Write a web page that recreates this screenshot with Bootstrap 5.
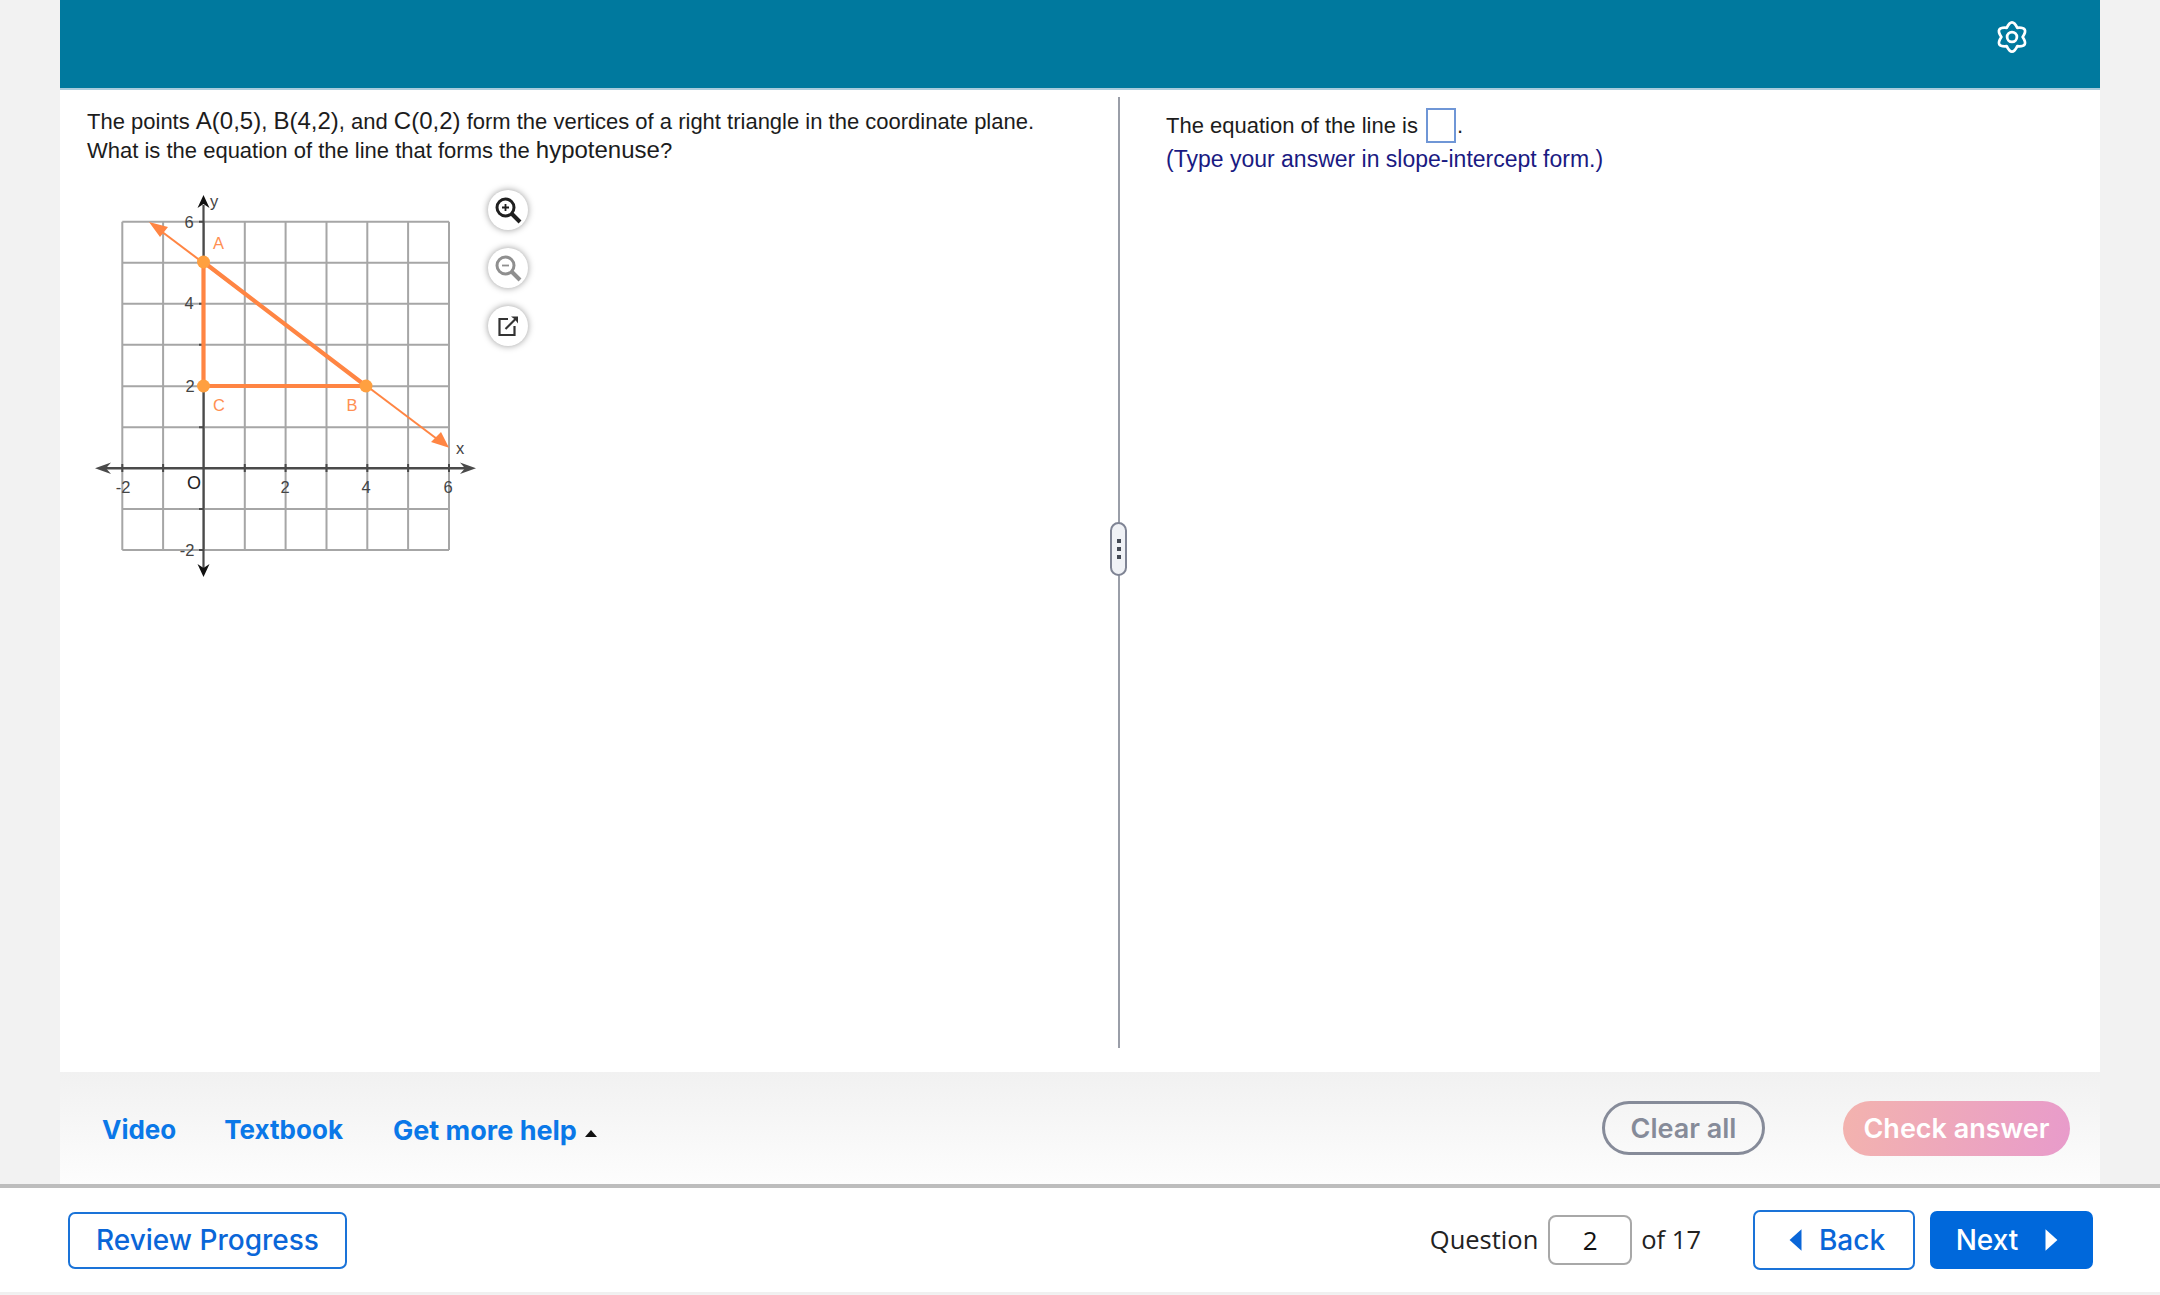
<!DOCTYPE html>
<html lang="en">
<head>
<meta charset="utf-8">
<title>Question</title>
<link href="https://cdn.jsdelivr.net/npm/bootstrap@5.3.0/dist/css/bootstrap.min.css" rel="stylesheet">
<style>
html,body{height:100%}
body{background:#f2f2f2;font-family:"Liberation Sans",Arial,sans-serif;overflow:hidden}
.shell{width:2040px;margin:0 auto}
.topbar{height:90px;background:#00799e;border-bottom:2px solid #a9cbdc;padding-right:71px}
.gear{width:34px;height:34px;margin-top:20px}
.work{height:982px;background:#fff;position:relative}
.leftpane{width:1058px;padding:17px 0 0 27px}
.qtext{font-size:22px;line-height:29px;color:#1c1c1c;margin:0}
.mth{font-size:24px;line-height:1}
.figure{margin:25px 0 0 3px}
.plot{width:400px;height:400px;display:block}
.tools{margin:0 0 0 -2px;gap:18px}
.roundtool{width:40px;height:40px;border-radius:50%;background:#fff;box-shadow:0 0 7px rgba(0,0,0,.4);border:0;padding:0}
.rightpane{margin-top:7px;height:951px;border-left:2px solid #9a9ea8;padding:11px 0 0 46px;font-size:22px;color:#1c1c1c}
.ansline{height:35px;line-height:35px}
.ansbox{display:inline-block;width:30px;height:35px;border:2px solid #6f96d6;vertical-align:top;margin:0 1px 0 2px}
.hint{color:#1a1a82;line-height:33px;font-size:23px}
.grip{position:absolute;left:1050px;top:432px;width:17px;height:54px;border:2px solid #7f8494;border-radius:9px;background:#f0f2f6;gap:4px}
.grip i{display:block;width:4px;height:4px;background:#444a55}
.toolsbar{height:112px;background:linear-gradient(#f1f1f1,#fdfdfd);padding:0 30px 0 42px}
.helpgroup{padding-top:2px}
.linkish{font-family:Inter,sans-serif;font-weight:700;font-size:26px;color:#0a78e8;text-decoration:none;padding:0;border:0;background:none}
.linknext{margin-left:48px}
.linkbig{font-size:27px;margin-left:50px;margin-top:4px}
.caret{width:0;height:0;border-left:6.5px solid transparent;border-right:6.5px solid transparent;border-bottom:7px solid #111;margin:9px 0 0 8px}
.clearbtn{font-family:Inter,sans-serif;font-weight:600;font-size:27px;width:163px;height:54px;border:3px solid #868b99;border-radius:27px;background:transparent;color:#868b99;padding:2px 0 0;margin-right:78px}
.checkbtn{font-family:Inter,sans-serif;font-weight:600;font-size:27px;width:227px;height:55px;border:0;border-radius:28px;background:linear-gradient(100deg,#f3b3ae,#e89bcb);color:#fff;padding:2px 0 0}
.footbar{height:110px;background:#fff;border-top:4px solid #bdbdbd;border-bottom:2px solid #f0f0f0;padding:0 67px 0 68px}
.outbtn{font-family:Inter,sans-serif;font-size:28px;font-weight:500;color:#0a66d8;background:#fff;border:2px solid #1a73d8;border-radius:7px;padding:0}
.revbtn{width:279px;height:57px}
.qlabel{font-family:"Open Sans",sans-serif;font-size:25.5px;color:#222;margin-top:-2px}
.qinput{width:84px;height:50px;border:2px solid #a8a8a8;border-radius:8px;text-align:center;font-family:"Open Sans",sans-serif;font-size:26px;color:#111;margin:0 9px 0 10px;padding:0}
.backbtn{width:162px;height:60px;margin-left:52px;gap:17px;padding-left:5px}
.nextbtn{font-family:Inter,sans-serif;font-size:28px;font-weight:500;width:163px;height:58px;margin-left:15px;background:#0068db;color:#fff;border:0;border-radius:7px;padding:0 8px 0 0;gap:27px}
.tri{width:14px;height:26px}
</style>
</head>
<body>
<div class="shell">
  <div class="topbar d-flex justify-content-end">
    <svg class="gear" viewBox="0 0 32 32" fill="none" stroke="#fff" stroke-width="2.6" stroke-linejoin="round"><path d="M21 7.34Q32.45 6.5 26 16Q32.45 25.5 21 24.66Q16 35 11 24.66Q-.45 25.5 6 16Q-.45 6.500 11 7.34Q16 -3 21 7.34Z"/><circle cx="16" cy="16" r="4.600"/></svg>
  </div>
  <div class="work d-flex">
    <div class="leftpane">
      <p class="qtext">The points <span class="mth">A(0,5)</span>, <span class="mth">B(4,2)</span>, and <span class="mth">C(0,2)</span> form the vertices of a right triangle in the coordinate plane.<br>What is the equation of the line that forms the <span class="mth">hypotenuse</span>?</p>
      <div class="figure d-flex">
        <svg class="plot" viewBox="90 190 400 400" font-family="Liberation Sans, sans-serif" font-size="16.5" text-anchor="middle">
          <g stroke="#a6a6a6" stroke-width="2" fill="none">
            <path d="M122.3 221.7V550M163.1 221.7V550M204 221.7V550M244.8 221.7V550M285.6 221.7V550M326.5 221.7V550M367.3 221.7V550M408.1 221.7V550M449 221.7V550"/>
            <path d="M122.3 221.7H449M122.3 262.7H449M122.3 303.8H449M122.3 344.8H449M122.3 386.3H449M122.3 427.3H449M122.3 509H449M122.3 550H449"/>
          </g>
          <path d="M100 468.3H470" stroke="#4a4a4a" stroke-width="2.4"/>
          <path d="M203.5 205V570" stroke="#4a4a4a" stroke-width="2.2"/>
          <path d="M122.3 464V472M163.1 464V472M244.8 464V472M285.6 464V472M326.5 464V472M367.3 464V472M408.1 464V472M449 464V472M199 221.7H204M199 262.7H204M199 303.8H204M199 344.8H204M199 427.3H204M199 509H204M199 550H204" stroke="#4a4a4a" stroke-width="2"/>
          <path d="M95 468.3L111 462.5L106 468.3L111 474.1Z M476 468.3L460 462.5L465 468.3L460 474.1Z" fill="#4a4a4a"/>
          <path d="M203.5 195L197.5 208L203.5 204L209.5 208Z M203.5 577L197.5 564L203.5 568L209.5 564Z" fill="#111"/>
          <path d="M153 225L445 445" stroke="#ff8543" stroke-width="2"/>
          <path d="M149 222L168 227L160 237Z M449 447.7L441 432L431 442Z" fill="#ff8543"/>
          <path d="M203.5 262L366 386H203.5Z" fill="none" stroke="#ff8543" stroke-width="4.2" stroke-linejoin="round"/>
          <g fill="#ffa040"><circle cx="203.5" cy="262" r="6.500"/><circle cx="203.5" cy="386" r="6.500"/><circle cx="366" cy="386" r="6.500"/></g>
          <g fill="#ff8f52"><text x="218.500" y="249">A</text><text x="219" y="411">C</text><text x="352" y="411">B</text></g>
          <g fill="#444">
            <text x="189" y="228">6</text><text x="189" y="309">4</text><text x="190" y="392">2</text><text x="187" y="556">-2</text>
            <text x="123" y="493">-2</text><text x="285" y="493">2</text><text x="366" y="493">4</text><text x="448" y="493">6</text>
            <text x="214" y="207">y</text><text x="460" y="454">x</text>
          </g>
          <text x="194" y="489" fill="#222" font-size="18">O</text>
        </svg>
        <div class="tools d-flex flex-column">
          <button class="roundtool d-flex align-items-center justify-content-center" type="button" aria-label="Zoom in"><svg width="30" height="30" viewBox="0 0 30 30" fill="none" stroke="#1f1f1f" stroke-width="3"><circle cx="12.500" cy="12.500" r="8.500"/><path d="M18.500 18.500L27 27" stroke-width="4"/><path d="M12.500 9V16M9 12.500H16" stroke-width="1.8"/></svg></button>
          <button class="roundtool d-flex align-items-center justify-content-center" type="button" aria-label="Zoom out"><svg width="30" height="30" viewBox="0 0 30 30" fill="none" stroke="#8f8f8f" stroke-width="3"><circle cx="12.500" cy="12.500" r="8.500"/><path d="M18.500 18.500L27 27" stroke-width="4"/><path d="M9 12.500H16" stroke-width="1.8"/></svg></button>
          <button class="roundtool d-flex align-items-center justify-content-center" type="button" aria-label="Open in new window"><svg width="24" height="24" viewBox="0 0 24 24" fill="none" stroke="#333" stroke-width="2.200"><path d="M12 5H3.500V21H18.500V12"/><path d="M9.500 15L20 4.500"/><path d="M15 2.500H22V9.500L19 5.500Z" fill="#333" stroke="none"/></svg></button>
        </div>
      </div>
    </div>
    <div class="rightpane">
      <div class="ansline">The equation of the line is <span class="ansbox"></span>.</div>
      <div class="hint">(Type your answer in slope-intercept form.)</div>
    </div>
    <div class="grip d-flex flex-column align-items-center justify-content-center"><i></i><i></i><i></i></div>
  </div>
  <div class="toolsbar d-flex align-items-center justify-content-between">
    <div class="helpgroup d-flex align-items-center">
      <a class="linkish" href="#">Video</a>
      <a class="linkish linknext" href="#">Textbook</a>
      <a class="linkish linkbig" href="#">Get more help</a>
      <span class="caret"></span>
    </div>
    <div class="d-flex align-items-center">
      <button class="clearbtn" type="button">Clear all</button>
      <button class="checkbtn" type="button">Check answer</button>
    </div>
  </div>
</div>
<div class="footbar d-flex align-items-center justify-content-between">
  <button class="outbtn revbtn" type="button">Review Progress</button>
  <div class="d-flex align-items-center">
    <span class="qlabel">Question</span>
    <input class="qinput" type="text" value="2" aria-label="Question number">
    <span class="qlabel">of 17</span>
    <button class="outbtn backbtn d-flex align-items-center justify-content-center" type="button"><svg class="tri" viewBox="0 0 12 24"><path d="M12 2V22L1 12Z" fill="#0a66d8"/></svg>Back</button>
    <button class="nextbtn d-flex align-items-center justify-content-center" type="button">Next<svg class="tri" viewBox="0 0 12 24"><path d="M0 2V22L11 12Z" fill="#fff"/></svg></button>
  </div>
</div>
<script src="https://cdn.jsdelivr.net/npm/bootstrap@5.3.0/dist/js/bootstrap.bundle.min.js"></script>
</body>
</html>
